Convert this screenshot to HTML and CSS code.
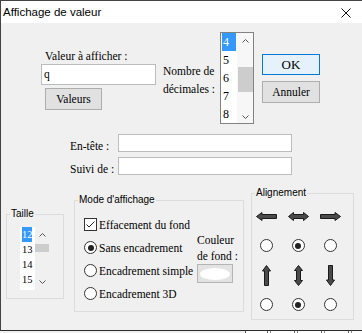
FILE: index.html
```html
<!DOCTYPE html>
<html lang="fr">
<head>
    <meta charset="UTF-8">
    <title>Affichage de valeur</title>
    <link rel="stylesheet" href="styles.css">
</head>
<body>
    <div class="window">
        <div class="titlebar">
            <span class="title">Affichage de valeur</span>
            <svg class="close" width="10" height="10" viewBox="0 0 10 10">
                <path d="M0.5 0.5 L9.5 9.5 M9.5 0.5 L0.5 9.5" stroke="#111" stroke-width="1" fill="none"/>
            </svg>
        </div>

        <div class="client">
            <div class="top-row">
                <div class="value-col">
                    <div class="lbl">Valeur à afficher :</div>
                    <div class="textbox value-box">q</div>
                    <div class="btn btn-values">Valeurs</div>
                </div>
                <div class="dec-label">Nombre de<br>décimales :</div>
                <div class="dec-list">
                    <div class="dec-items">
                        <div class="item sel">4</div>
                        <div class="item">5</div>
                        <div class="item">6</div>
                        <div class="item">7</div>
                        <div class="item">8</div>
                    </div>
                    <div class="vscroll dec-scroll">
                        <svg class="chev" width="7" height="4" viewBox="0 0 7 4"><path d="M0.5 3.5 L3.5 0.5 L6.5 3.5" stroke="#555" fill="none"/></svg>
                        <div class="thumb"></div>
                        <svg class="chev chev-down" width="7" height="4" viewBox="0 0 7 4"><path d="M0.5 0.5 L3.5 3.5 L6.5 0.5" stroke="#555" fill="none"/></svg>
                    </div>
                </div>
                <div class="actions">
                    <div class="btn btn-ok">OK</div>
                    <div class="btn btn-cancel">Annuler</div>
                </div>
            </div>

            <div class="field-row">
                <label>En-tête :</label>
                <div class="textbox field-box"></div>
            </div>
            <div class="field-row field-row-next">
                <label>Suivi de :</label>
                <div class="textbox field-box"></div>
            </div>

            <div class="groups">
                <fieldset class="grp grp-size">
                    <legend>Taille</legend>
                    <div class="size-list">
                        <div class="size-items">
                            <div class="item sel">12</div>
                            <div class="item">13</div>
                            <div class="item">14</div>
                            <div class="item">15</div>
                        </div>
                        <div class="vscroll size-scroll">
                            <svg class="chev" width="7" height="4" viewBox="0 0 7 4"><path d="M0.5 3.5 L3.5 0.5 L6.5 3.5" stroke="#555" fill="none"/></svg>
                            <div class="thumb"></div>
                            <svg class="chev chev-down" width="7" height="4" viewBox="0 0 7 4"><path d="M0.5 0.5 L3.5 3.5 L6.5 0.5" stroke="#555" fill="none"/></svg>
                        </div>
                    </div>
                </fieldset>

                <fieldset class="grp grp-mode">
                    <legend>Mode d'affichage</legend>
                    <div class="mode-body">
                        <div class="mode-opts">
                            <div class="opt">
                                <span class="check">
                                    <svg width="11" height="11" viewBox="0 0 11 11"><path d="M1.5 5.5 L4 8 L9.5 2.5" stroke="#222" fill="none"/></svg>
                                </span>
                                Effacement du fond
                            </div>
                            <div class="opt"><span class="radio on"></span>Sans encadrement</div>
                            <div class="opt"><span class="radio"></span>Encadrement simple</div>
                            <div class="opt"><span class="radio"></span>Encadrement 3D</div>
                        </div>
                        <div class="bg-color">
                            <div class="bg-label">Couleur<br>de fond :</div>
                            <div class="swatch"><span class="swatch-fill"></span></div>
                        </div>
                    </div>
                </fieldset>

                <fieldset class="grp grp-align">
                    <legend>Alignement</legend>
                    <div class="align-grid">
                        <svg width="21" height="9" viewBox="0 0 21 9"><path class="arrow" d="M0.5 4.5 L6 0.5 L6 2.5 L20.5 2.5 L20.5 6.5 L6 6.5 L6 8.5 Z"/></svg>
                        <svg width="21" height="9" viewBox="0 0 21 9"><path class="arrow" d="M0.5 4.5 L5.5 0.5 L5.5 2.5 L15.5 2.5 L15.5 0.5 L20.5 4.5 L15.5 8.5 L15.5 6.5 L5.5 6.5 L5.5 8.5 Z"/></svg>
                        <svg width="21" height="9" viewBox="0 0 21 9"><path class="arrow" d="M20.5 4.5 L15 0.5 L15 2.5 L0.5 2.5 L0.5 6.5 L15 6.5 L15 8.5 Z"/></svg>

                        <span class="radio"></span>
                        <span class="radio on"></span>
                        <span class="radio"></span>

                        <svg width="9" height="21" viewBox="0 0 9 21"><path class="arrow" d="M4.5 0.5 L8.5 6 L6.5 6 L6.5 20.5 L2.5 20.5 L2.5 6 L0.5 6 Z"/></svg>
                        <svg width="9" height="21" viewBox="0 0 9 21"><path class="arrow" d="M4.5 0.5 L8.5 5.5 L6.5 5.5 L6.5 15.5 L8.5 15.5 L4.5 20.5 L0.5 15.5 L2.5 15.5 L2.5 5.5 L0.5 5.5 Z"/></svg>
                        <svg width="9" height="21" viewBox="0 0 9 21"><path class="arrow" d="M4.5 20.5 L8.5 15 L6.5 15 L6.5 0.5 L2.5 0.5 L2.5 15 L0.5 15 Z"/></svg>

                        <span class="radio"></span>
                        <span class="radio on"></span>
                        <span class="radio"></span>
                    </div>
                </fieldset>
            </div>
        </div>
    </div>
    <div class="below">
        <div class="below-left"></div>
        <div class="below-right"></div>
    </div>
</body>
</html>
```

FILE: styles.css
```css
* {
    box-sizing: border-box;
}
body {
    margin: 0;
    width: 362px;
    height: 333px;
    overflow: hidden;
    background-color: #f0f0f0;
    font-family: "Liberation Serif", "Times New Roman", serif;
    font-size: 11.5px;
    color: #000;
}
.window {
    height: 331px;
    border-top: 1px solid #444;
    border-left: 1px solid #444;
    border-bottom: 1px solid #2b2b2b;
    display: flex;
    flex-direction: column;
}
.titlebar {
    height: 22px;
    background-color: #fff;
    display: flex;
    align-items: center;
    justify-content: space-between;
    padding: 0 11px 0 2px;
    font-family: "Liberation Sans", Arial, sans-serif;
    font-size: 11.5px;
}
.close {
    margin-top: 1px;
}
.client {
    flex: 1;
    background-color: #f0f0f0;
}

/* haut : valeur, décimales, boutons */
.top-row {
    display: flex;
    align-items: flex-start;
    padding-left: 40px;
}
.value-col {
    width: 115px;
    margin-top: 26px;
}
.lbl {
    line-height: 14px;
    padding-left: 4px;
}
.textbox {
    background-color: #fff;
    border: 1px solid #bcbcbc;
}
.value-box {
    height: 21px;
    margin-top: 1px;
    padding-left: 2px;
    line-height: 19px;
}
.btn {
    background-color: #e1e1e1;
    border: 1px solid #adadad;
    display: flex;
    align-items: center;
    justify-content: center;
}
.btn-values {
    width: 57px;
    height: 22px;
    margin: 3px 0 0 4px;
}
.dec-label {
    width: 57px;
    margin: 39px 0 0 7px;
    line-height: 18px;
}
.dec-list {
    width: 34px;
    height: 92px;
    margin-top: 9px;
    border: 1px solid #828282;
    background-color: #fff;
    display: flex;
}
.dec-items {
    width: 16px;
    padding-left: 1px;
    font-size: 12px;
    line-height: 18px;
}
.dec-items .item {
    width: 14px;
    padding-left: 1px;
}
.item.sel {
    background-color: #3399ff;
    color: #fff;
}
.vscroll {
    display: flex;
    flex-direction: column;
    align-items: center;
}
.chev {
    display: block;
}
.thumb {
    background-color: #cdcdcd;
}
.dec-scroll {
    width: 16px;
    padding-top: 6px;
    background-color: #f7f7f7;
}
.dec-scroll .thumb {
    width: 15px;
    height: 25px;
    margin-top: 24px;
}
.dec-scroll .chev-down {
    margin-top: 23px;
}
.actions {
    width: 58px;
    margin: 31px 0 0 8px;
}
.btn-ok {
    height: 21px;
    background-color: #e5f1fb;
    border-color: #0078d7;
    font-size: 13px;
}
.btn-cancel {
    height: 22px;
    margin-top: 6px;
}

/* en-tête, suivi */
.field-row {
    display: flex;
    align-items: flex-start;
    height: 18px;
    padding-left: 69px;
    margin-top: 10px;
}
.field-row-next {
    margin-top: 5px;
}
.field-row label {
    width: 48px;
    line-height: 18px;
    margin-top: 3px;
}
.field-box {
    width: 174px;
    height: 18px;
}

/* groupes du bas */
.groups {
    display: flex;
    align-items: flex-start;
    padding-left: 5px;
}
.grp {
    margin: 0;
    padding: 0;
    min-width: 0;
    border: 1px solid #dcdcdc;
}
.grp legend {
    font-family: "Liberation Sans", Arial, sans-serif;
    font-size: 10px;
    line-height: 12px;
    padding: 0 1px;
    margin-left: 3px;
}
.grp-size {
    width: 58px;
    height: 91px;
    margin-top: 33px;
}
.grp-mode {
    width: 170px;
    height: 118px;
    margin: 19px 0 0 10px;
}
.grp-align {
    width: 103px;
    height: 133px;
    margin: 12px 0 0 7px;
}
.size-list {
    display: flex;
    margin: 7px 0 0 13px;
}
.size-items {
    width: 15px;
    height: 63px;
    padding-left: 2px;
    background-color: #fff;
    font-size: 10.5px;
    line-height: 15px;
}
.size-items .item {
    width: 10px;
}
.size-scroll {
    width: 14px;
    padding-top: 6px;
}
.size-scroll .thumb {
    width: 14px;
    height: 8px;
    margin-top: 7px;
}
.size-scroll .chev-down {
    margin-top: 28px;
}
.mode-body {
    display: flex;
    margin-top: 7px;
    padding-left: 9px;
}
.mode-opts {
    width: 113px;
}
.opt {
    height: 23px;
    display: flex;
    align-items: center;
    gap: 2px;
    white-space: nowrap;
}
.check,
.radio {
    flex: none;
    width: 13px;
    height: 13px;
    border: 1px solid #333;
    background-color: #fff;
    display: flex;
    align-items: center;
    justify-content: center;
}
.radio {
    border-radius: 50%;
}
.radio.on::after {
    content: "";
    width: 6px;
    height: 6px;
    border-radius: 50%;
    background-color: #222;
}
.bg-color {
    margin-top: 19px;
}
.bg-label {
    line-height: 16px;
}
.swatch {
    width: 36px;
    height: 19px;
    border: 1px solid #b4b4b4;
    background-color: #e3e3e3;
    display: flex;
    align-items: center;
    justify-content: center;
}
.swatch-fill {
    width: 30px;
    height: 12px;
    border-radius: 50%;
    background-color: #fff;
}
.align-grid {
    display: grid;
    grid-template-columns: repeat(3, 20px);
    grid-template-rows: repeat(4, 20px);
    column-gap: 12px;
    row-gap: 9.5px;
    margin: 7px 0 0 4px;
    justify-items: center;
    align-items: center;
}
.arrow {
    fill: #4a4a4a;
    stroke: #1a1a1a;
    stroke-width: 1;
}

/* bande sous la fenêtre */
.below {
    height: 2px;
    display: flex;
}
.below-left {
    width: 245px;
    background-color: #f0f0f0;
}
.below-right {
    flex: 1;
    border-left: 1px solid #555;
    background-color: #fff;
    background-image: repeating-linear-gradient(90deg, transparent 0 21px, #666 21px 22px, transparent 22px 24px, #888 24px 25px, transparent 25px 27px);
}
```
